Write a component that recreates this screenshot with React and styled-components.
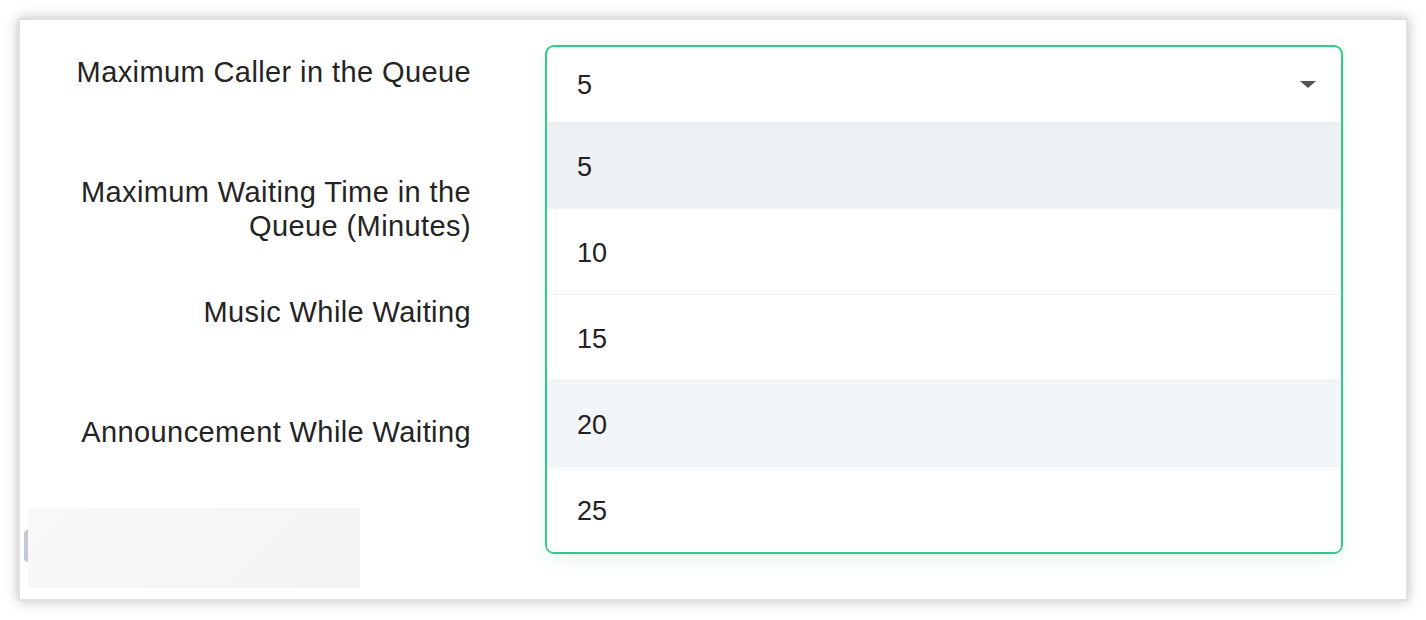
import React from "react";
import styled, { createGlobalStyle } from "styled-components";

const GlobalStyle = createGlobalStyle`
    html, body {
        margin: 0;
        padding: 0;
        background: #ffffff;
        font-family: "Liberation Sans", Arial, Helvetica, sans-serif;
        color: #262626;
    }
    * {
        box-sizing: border-box;
    }
`;

const options = ["5", "10", "15", "20", "25"];

const rows = [
    { label: "Maximum Caller in the Queue", height: 120, select: true },
    { label: "Maximum Waiting Time in the Queue (Minutes)", height: 120 },
    { label: "Music While Waiting", height: 120 },
    { label: "Announcement While Waiting", height: 103 },
];

const App = () => {
    return (
        <Page>
            <GlobalStyle />
            <Card>
                {rows.map((row) => (
                    <Row key={row.label} $h={row.height}>
                        <Label>{row.label}</Label>
                        <Control>
                            {row.select && (
                                <Select>
                                    <Head>
                                        <Value>5</Value>
                                        <Caret />
                                    </Head>
                                    {options.map((opt, i) => (
                                        <Option key={opt} $first={i === 0} $active={i === 0} $hover={i === 3}>
                                            {opt}
                                        </Option>
                                    ))}
                                </Select>
                            )}
                        </Control>
                    </Row>
                ))}
                <Footer>
                    <Pill />
                    <Blurred />
                </Footer>
            </Card>
        </Page>
    );
};

const Page = styled.div`
    padding: 18px 18px 20px 18px;
`;

const Card = styled.div`
    width: 1390px;
    height: 583px;
    background: #fff;
    border: 2px solid #e0e0e0;
    box-shadow: 0 0 12px rgba(0, 0, 0, 0.26);
    padding: 25px 0 11px 0;
    display: flex;
    flex-direction: column;
`;

const Row = styled.div`
    display: grid;
    grid-template-columns: 451px 798px;
    column-gap: 74px;
    height: ${(p) => p.$h}px;
`;

const Label = styled.div`
    text-align: right;
    font-size: 29px;
    letter-spacing: 0.4px;
    line-height: 34px;
    padding-top: 10px;
    color: #242424;
`;

const Control = styled.div`
    position: relative;
`;

const Select = styled.div`
    position: absolute;
    top: 0;
    left: 0;
    width: 798px;
    z-index: 5;
    background: #fff;
    border: 2px solid #2fcc86;
    border-radius: 9px;
    overflow: hidden;
    box-shadow: 0 6px 18px rgba(40, 180, 120, 0.1);
`;

const Head = styled.div`
    height: 75px;
    display: flex;
    align-items: center;
    justify-content: space-between;
    padding: 2px 25px 0 30px;
    box-shadow: 0 2px 6px rgba(0, 0, 0, 0.04);
    position: relative;
    z-index: 1;
`;

const Value = styled.span`
    font-size: 27px;
    color: #222;
`;

const Caret = styled.span`
    width: 0;
    height: 0;
    border-left: 8px solid transparent;
    border-right: 8px solid transparent;
    border-top: 7px solid #555;
    margin-top: -2px;
`;

const Option = styled.div`
    height: 86px;
    display: flex;
    align-items: center;
    padding: 4px 30px 0 30px;
    font-size: 27px;
    color: #222;
    border-top: ${(p) => (p.$first ? "none" : "1px solid #edf0f3")};
    background: ${(p) => (p.$active ? "#edf1f4" : p.$hover ? "#f3f6f9" : "#fff")};
`;

const Footer = styled.div`
    margin-top: auto;
    display: flex;
    align-items: flex-start;
    padding-left: 4px;
    height: 80px;
`;

const Pill = styled.div`
    width: 4px;
    height: 32px;
    margin-top: 22px;
    background: #c4c9d1;
    border-radius: 4px 0 0 4px;
`;

const Blurred = styled.div`
    width: 332px;
    height: 80px;
    background: linear-gradient(135deg, #f8f8f8, #f4f4f4);
`;

export default App;
